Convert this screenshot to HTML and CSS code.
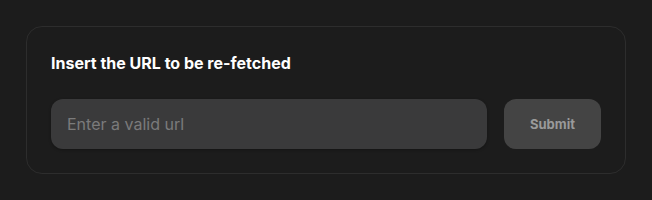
FILE: index.html
```html
<!DOCTYPE html>
<html lang="en">
<head>
    <meta charset="UTF-8">
    <meta name="viewport" content="width=device-width, initial-scale=1.0">
    <title>Re-fetch URL</title>
    <link rel="stylesheet" href="styles.css">
    <script>
        document.addEventListener("DOMContentLoaded", function () {
            // Focus the url field so the caret shows
            document.querySelector(".url-input").focus();
        });
    </script>
</head>
<body>

<section class="refetch-card">
    <h2 class="refetch-title">Insert the URL to be re-fetched</h2>
    <form class="refetch-form" onsubmit="return false;">
        <input class="url-input" type="text" placeholder="Enter a valid url" autofocus>
        <button class="submit-btn" type="submit" disabled>Submit</button>
    </form>
</section>

</body>
</html>
```
FILE: styles.css
```css
body {
    font-family: Inter, "Noto Sans", sans-serif;
    margin: 0;
    padding: 26px 0;
    background-color: #1c1c1c;
}

.refetch-card {
    box-sizing: border-box;
    width: 600px;
    margin: 0 auto;
    padding: 24px;
    border: 1px solid #2d2d2d;
    border-radius: 16px;
}

.refetch-title {
    margin: 0 0 24px 0;
    font-size: 16px;
    line-height: 24px;
    font-weight: 700;
    color: #ffffff;
}

.refetch-form {
    display: flex;
    gap: 17px;
}

.url-input {
    flex: 1;
    height: 50px;
    box-sizing: border-box;
    padding: 0 16px;
    border: none;
    border-radius: 12px;
    background-color: #3a3a3b;
    color: #ffffff;
    caret-color: #ffffff;
    font-family: Inter, "Noto Sans", sans-serif;
    font-size: 16px;
    outline: none;
    box-shadow: 0 1px 3px rgba(0, 0, 0, 0.3);
}

.url-input::placeholder {
    color: #7b7b7b;
}

.submit-btn {
    width: 97px;
    height: 50px;
    border: none;
    border-radius: 12px;
    background-color: #444444;
    color: #9a9a9a;
    font-family: Inter, "Noto Sans", sans-serif;
    font-size: 13px;
    font-weight: 700;
}
```
